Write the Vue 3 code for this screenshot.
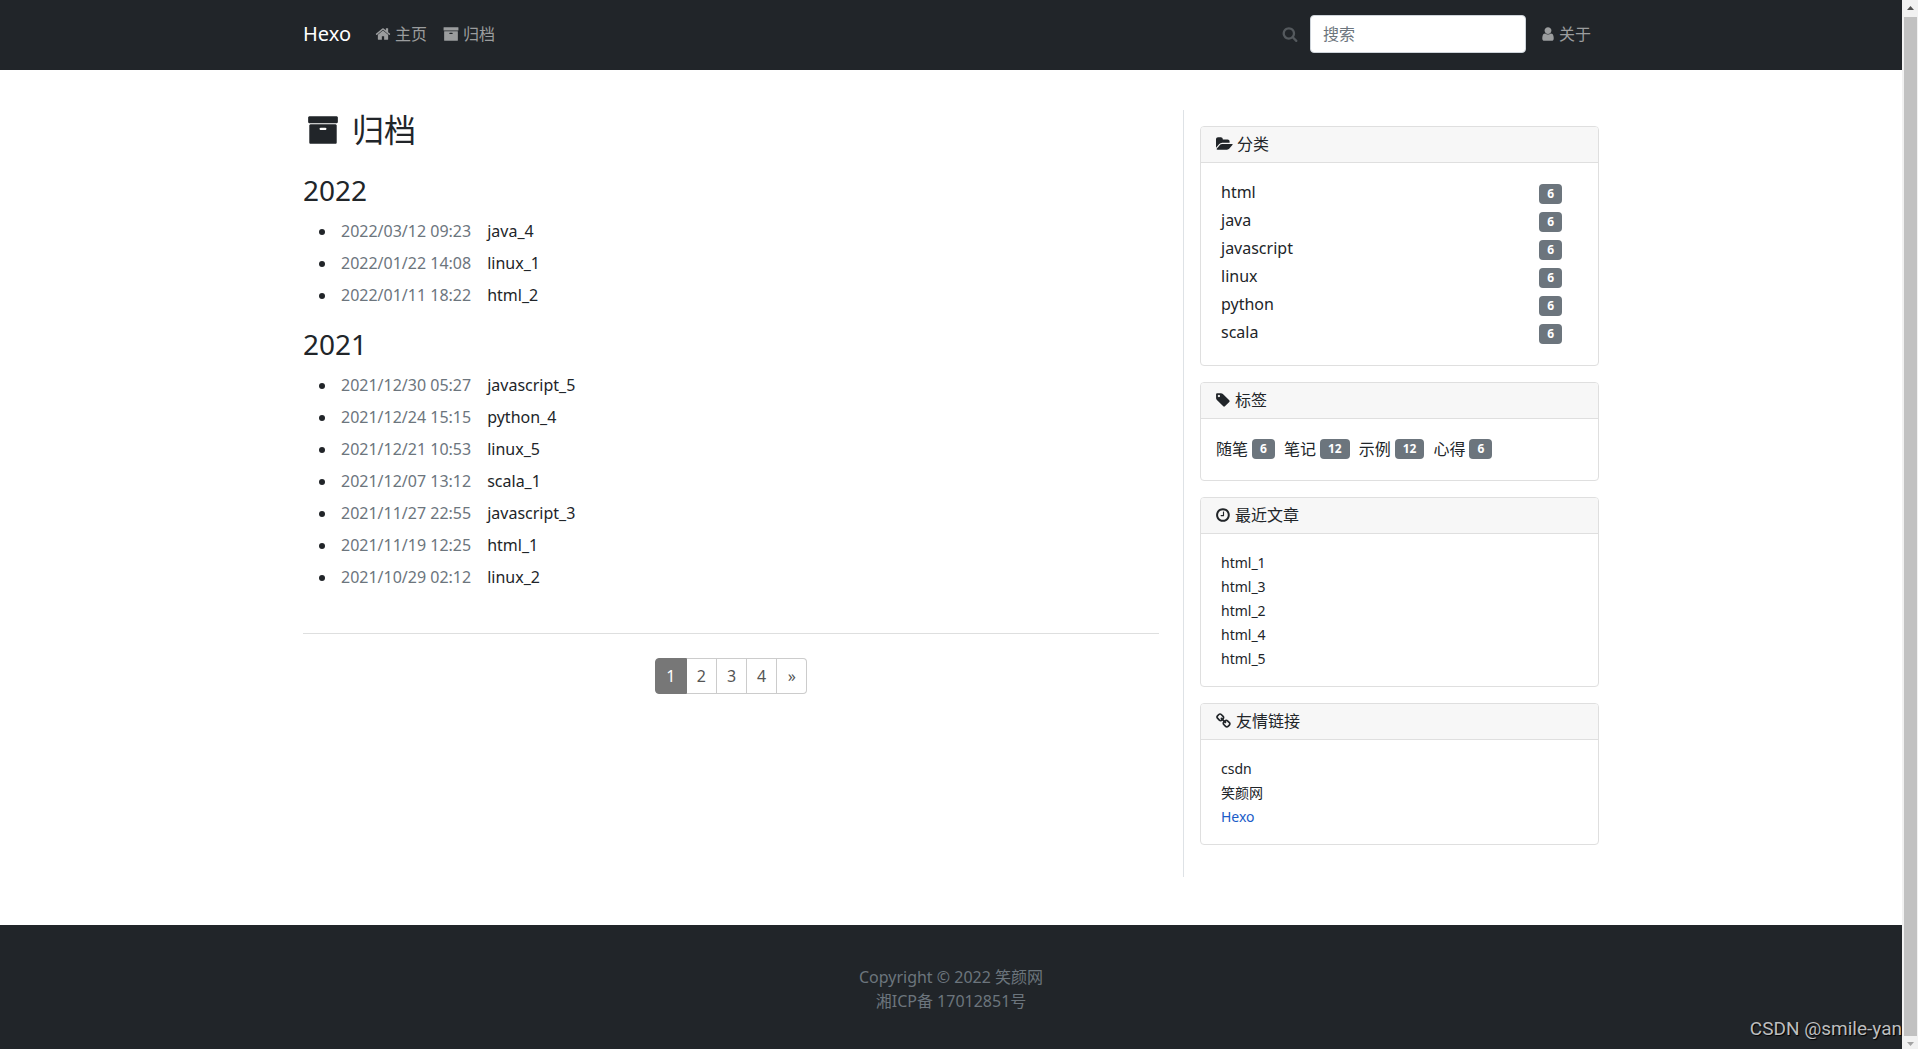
<script setup>
const icons = {
  home: 'M1472 992v480q0 26-19 45t-45 19h-384v-384h-256v384h-384q-26 0-45-19t-19-45v-480q0-1 .5-3t.5-3l575-474 575 474q1 2 1 6zm223-69l-62 74q-8 9-21 11h-3q-13 0-21-7l-692-577-692 577q-12 8-24 7-13-2-21-11l-62-74q-8-10-7-23.5t11-21.5l719-599q32-26 76-26t76 26l244 204v-195q0-14 9-23t23-9h192q14 0 23 9t9 23v408l219 182q10 8 11 21.5t-7 23.5z',
  archive: 'M1088 832q0-26-19-45t-45-19h-256q-26 0-45 19t-19 45 19 45 45 19h256q26 0 45-19t19-45zm576-192v960q0 26-19 45t-45 19h-1408q-26 0-45-19t-19-45v-960q0-26 19-45t45-19h1408q26 0 45 19t19 45zm64-448v256q0 26-19 45t-45 19h-1536q-26 0-45-19t-19-45v-256q0-26 19-45t45-19h1536q26 0 45 19t19 45z',
  search: 'M1216 832q0-185-131.5-316.5t-316.5-131.5-316.5 131.5-131.5 316.5 131.5 316.5 316.5 131.5 316.5-131.5 131.5-316.5zm512 832q0 52-38 90t-90 38q-54 0-90-38l-343-342q-179 124-399 124-143 0-273.5-55.5t-225-150-150-225-55.5-273.5 55.5-273.5 150-225 225-150 273.5-55.5 273.5 55.5 225 150 150 225 55.5 273.5q0 220-124 399l343 343q37 37 37 90z',
  user: 'M1536 1399q0 109-62.5 187t-150.5 78h-854q-88 0-150.5-78t-62.5-187q0-85 8.5-160.5t31.5-152 58.5-131 94-89 134.5-34.5q131 128 313 128t313-128q76 0 134.5 34.5t94 89 58.5 131 31.5 152 8.5 160.5zm-256-887q0 159-112.5 271.5t-271.5 112.5-271.5-112.5-112.5-271.5 112.5-271.5 271.5-112.5 271.5 112.5 112.5 271.5z',
  folder: 'M1879 952q0 31-31 66l-336 396q-43 51-120.5 86.5t-143.5 35.5h-1088q-34 0-60.5-13t-26.5-43q0-31 31-66l336-396q43-51 120.5-86.5t143.5-35.5h1088q34 0 60.5 13t26.5 43zm-343-344v160h-832q-94 0-197 47.5t-164 119.5l-337 396-5 6q0-4-.5-12.5t-.5-12.5v-960q0-92 66-158t158-66h320q92 0 158 66t66 158v32h544q92 0 158 66t66 158z',
  tag: 'M576 448q0-53-37.5-90.5t-90.5-37.5-90.5 37.5-37.5 90.5 37.5 90.5 90.5 37.5 90.5-37.5 37.5-90.5zm1067 576q0 53-37 90l-491 492q-39 37-91 37-53 0-90-37l-715-716q-38-37-64.5-101t-26.5-117v-416q0-52 38-90t90-38h416q53 0 117 26.5t102 64.5l715 714q37 39 37 91z',
  clock: 'M1024 544v448q0 14-9 23t-23 9h-320q-14 0-23-9t-9-23v-64q0-14 9-23t23-9h224v-352q0-14 9-23t23-9h64q14 0 23 9t9 23zm416 352q0-148-73-273t-198-198-273-73-273 73-198 198-73 273 73 273 198 198 273 73 273-73 198-198 73-273zm224 0q0 209-103 385.5t-279.5 279.5-385.5 103-385.5-103-279.5-279.5-103-385.5 103-385.5 279.5-279.5 385.5-103 385.5 103 279.5 279.5 103 385.5z',
  chain: 'M1520 1216q0-40-28-68l-208-208q-28-28-68-28-42 0-72 32 3 3 19 18.5t21.5 21.5 15 19 13 25.5 3.5 27.5q0 40-28 68t-68 28q-15 0-27.5-3.5t-25.5-13-19-15-21.5-21.5-18.5-19q-33 31-33 73 0 40 28 68l206 207q27 27 68 27 40 0 68-26l147-146q28-28 28-67zm-703-705q0-40-28-68l-206-207q-28-28-68-28-39 0-68 27l-147 146q-28 28-28 67 0 40 28 68l208 208q27 27 68 27 42 0 72-31-3-3-19-18.5t-21.5-21.5-15-19-13-25.5-3.5-27.5q0-40 28-68t68-28q15 0 27.5 3.5t25.5 13 19 15 21.5 21.5 18.5 19q33-31 33-73zm895 705q0 120-85 203l-147 146q-83 83-203 83-121 0-204-85l-206-207q-83-83-83-203 0-123 88-209l-88-88q-86 88-208 88-120 0-204-84l-208-208q-84-84-84-204t85-203l147-146q83-83 203-83 121 0 204 85l206 207q83 83 83 203 0 123-88 209l88 88q86-88 208-88 120 0 204 84l208 208q84 84 84 204z',
}

const archive = [
  {
    year: '2022',
    posts: [
      ['2022/03/12 09:23', 'java_4'],
      ['2022/01/22 14:08', 'linux_1'],
      ['2022/01/11 18:22', 'html_2'],
    ],
  },
  {
    year: '2021',
    posts: [
      ['2021/12/30 05:27', 'javascript_5'],
      ['2021/12/24 15:15', 'python_4'],
      ['2021/12/21 10:53', 'linux_5'],
      ['2021/12/07 13:12', 'scala_1'],
      ['2021/11/27 22:55', 'javascript_3'],
      ['2021/11/19 12:25', 'html_1'],
      ['2021/10/29 02:12', 'linux_2'],
    ],
  },
]
const pages = ['1', '2', '3', '4', '»']
const categories = ['html', 'java', 'javascript', 'linux', 'python', 'scala']
const tags = [['随笔', 6], ['笔记', 12], ['示例', 12], ['心得', 6]]
const recent = ['html_1', 'html_3', 'html_2', 'html_4', 'html_5']
const friends = ['csdn', '笑颜网', 'Hexo']
</script>

<template>
  <div class="shell">
    <div class="page">
      <header class="navbar">
        <nav class="container nav">
          <a class="brand" href="#">Hexo</a>
          <a class="nav-link" href="#"><svg class="icon" viewBox="0 0 1792 1792"><path :d="icons.home" /></svg>主页</a>
          <a class="nav-link" href="#"><svg class="icon" viewBox="0 0 1792 1792"><path :d="icons.archive" /></svg>归档</a>
          <form class="search" @submit.prevent>
            <label for="search" aria-label="搜索"><svg class="icon" viewBox="0 0 1792 1792"><path :d="icons.search" /></svg></label>
            <input id="search" type="search" placeholder="搜索">
          </form>
          <a class="nav-link about" href="#"><svg class="icon" viewBox="0 0 1792 1792"><path :d="icons.user" /></svg>关于</a>
        </nav>
      </header>

      <div class="container content">
        <main class="main">
          <h1 class="title"><svg class="title-icon" viewBox="0 0 1792 1792"><path :d="icons.archive" /></svg>归档</h1>
          <section v-for="group in archive" :key="group.year">
            <h2 class="year">{{ group.year }}</h2>
            <ul class="posts">
              <li v-for="[date, name] in group.posts" :key="date">
                <time>{{ date }}</time><a href="#">{{ name }}</a>
              </li>
            </ul>
          </section>
          <hr class="rule">
          <nav class="pagination" aria-label="分页">
            <a v-for="(page, i) in pages" :key="page" href="#" :class="{ active: i === 0 }">{{ page }}</a>
          </nav>
        </main>

        <aside class="sidebar">
          <section class="card">
            <h3><svg class="icon wide" viewBox="0 0 1920 1792"><path :d="icons.folder" /></svg>分类</h3>
            <ul class="categories">
              <li v-for="name in categories" :key="name"><a href="#">{{ name }}</a><span class="badge">6</span></li>
            </ul>
          </section>
          <section class="card">
            <h3><svg class="icon narrow" viewBox="128 0 1664 1792"><path :d="icons.tag" /></svg>标签</h3>
            <div class="tags">
              <a v-for="[name, count] in tags" :key="name" href="#">{{ name }}<span class="badge">{{ count }}</span></a>
            </div>
          </section>
          <section class="card">
            <h3><svg class="icon narrow" viewBox="128 0 1664 1792"><path :d="icons.clock" /></svg>最近文章</h3>
            <ul class="links">
              <li v-for="name in recent" :key="name"><a href="#">{{ name }}</a></li>
            </ul>
          </section>
          <section class="card">
            <h3><svg class="icon" viewBox="64 0 1792 1792"><path :d="icons.chain" /></svg>友情链接</h3>
            <ul class="links">
              <li v-for="name in friends" :key="name"><a href="#" :class="{ blue: name === 'Hexo' }">{{ name }}</a></li>
            </ul>
          </section>
        </aside>
      </div>

      <footer class="footer">
        <p>Copyright © 2022 笑颜网</p>
        <p>湘ICP备 17012851号</p>
      </footer>
      <div class="watermark">CSDN @smile-yan</div>
    </div>

    <div class="scrollbar" aria-hidden="true">
      <svg viewBox="0 0 16 17"><path d="M5 10h7L8.500 6z" fill="#505050" /></svg>
      <div class="thumb"></div>
      <svg viewBox="0 0 16 13"><path d="M5 6h7L8.500 10z" fill="#a3a3a3" /></svg>
    </div>
  </div>
</template>

<style>
body {
  margin: 0;
}
</style>

<style scoped>
.shell {
  display: grid;
  grid-template-columns: 1fr 16px;
  height: 100vh;
  overflow: hidden;
  font: 400 16px/24px "Noto Sans", "Noto Sans CJK SC", sans-serif;
  color: #212529;
  background: #fff;
}
.page {
  position: relative;
  display: flex;
  flex-direction: column;
  overflow: hidden;
}
a {
  color: inherit;
  text-decoration: none;
}
ul,
h1,
h2,
h3,
p {
  margin: 0;
  padding: 0;
  font-weight: 400;
}
.container {
  box-sizing: border-box;
  width: 100%;
  max-width: 1320px;
  margin: 0 auto;
  padding: 0 12px;
}
.icon {
  width: 16px;
  height: 16px;
  flex: none;
  fill: currentColor;
}
.icon.wide {
  width: 17px;
}
.icon.narrow {
  width: 15px;
}

/* top bar */
.navbar {
  background: #212529;
}
.nav {
  display: flex;
  align-items: center;
  height: 70px;
  padding-bottom: 2px;
}
.brand {
  margin-right: 24px;
  font-size: 20px;
  line-height: 30px;
  color: #fff;
}
.nav-link {
  display: flex;
  align-items: center;
  gap: 4px;
  margin-right: 16px;
  color: #9b9d9e;
}
.nav-link.about {
  margin: 0 8px 0 14px;
  gap: 3px;
}
.search {
  display: flex;
  align-items: center;
  gap: 12px;
  margin-left: auto;
  color: #54595d;
}
.search label {
  display: flex;
}
.search input {
  box-sizing: border-box;
  width: 216px;
  height: 38px;
  padding: 6px 12px;
  border: 1px solid #ced4da;
  border-radius: 4px;
  background: #fff;
  font: inherit;
  color: #212529;
}
.search input::placeholder {
  color: #6c757d;
  opacity: 1;
}

/* archive column */
.content {
  display: grid;
  grid-template-columns: minmax(0, 55fr) minmax(0, 26fr);
  margin-top: 40px;
  margin-bottom: 48px;
}
.main {
  padding-right: 24px;
}
.title {
  display: flex;
  align-items: center;
  gap: 13px;
  padding-left: 4px;
  margin-bottom: 24px;
  font-size: 32px;
  line-height: 39px;
}
.title-icon {
  width: 32px;
  height: 32px;
  fill: currentColor;
}
.year {
  margin-bottom: 8px;
  font-size: 28px;
  line-height: 34px;
}
.posts {
  margin-bottom: 16px;
  padding-left: 34px;
  line-height: 32px;
}
.posts time {
  margin: 0 16px 0 4px;
  color: #6c757d;
}
.rule {
  height: 1px;
  margin: 40px 0 24px;
  border: 0;
  background: #dedfdf;
}
.pagination {
  display: flex;
  justify-content: center;
}
.pagination a {
  box-sizing: border-box;
  min-width: 30px;
  padding: 5px 10px;
  border: 1px solid #ccc;
  border-left-width: 0;
  text-align: center;
  color: #555;
}
.pagination a.active {
  min-width: 32px;
  border-color: #777;
  border-left-width: 1px;
  border-radius: 4px 0 0 4px;
  background: #777;
  color: #fff;
}
.pagination a:last-child {
  border-radius: 0 4px 4px 0;
}

/* sidebar */
.sidebar {
  display: flex;
  flex-direction: column;
  gap: 16px;
  padding: 16px 0 32px 16px;
  border-left: 1px solid #dee2e6;
}
.card {
  border: 1px solid #dfdfdf;
  border-radius: 4px;
}
.card h3 {
  display: flex;
  align-items: center;
  gap: 4px;
  padding: 5px 15px 6px;
  border-bottom: 1px solid #dfdfdf;
  border-radius: 3px 3px 0 0;
  background: #f7f7f7;
  font-size: 16px;
  line-height: 24px;
}
.categories,
.links {
  list-style: none;
  padding: 17px 36px 15px 20px;
}
.categories {
  padding-bottom: 17px;
}
.categories li {
  display: flex;
  justify-content: space-between;
  align-items: flex-end;
  padding-bottom: 4px;
}
.links {
  font-size: 14px;
  line-height: 24px;
}
.links .blue {
  color: #1a5cc8;
}
.badge {
  box-sizing: border-box;
  height: 20px;
  padding: 0 8px;
  border-radius: 4px;
  background: #6c757d;
  font-size: 12px;
  font-weight: 700;
  line-height: 20px;
  color: #fff;
}
.tags {
  display: flex;
  flex-wrap: wrap;
  gap: 9px;
  padding: 18px 15px 19px;
}
.tags a {
  display: flex;
  align-items: center;
  gap: 4px;
}

/* footer */
.footer {
  flex: 1;
  padding-top: 40px;
  background: #212529;
  color: #6c757d;
  text-align: center;
}
.watermark {
  position: absolute;
  right: 0;
  bottom: 8px;
  font: 19px/24px Roboto, "Liberation Sans", sans-serif;
  color: #bdbebf;
  text-shadow: 1px 1px 1px #000;
}

/* scrollbar */
.scrollbar {
  display: flex;
  flex-direction: column;
  background: #f1f1f1;
}
.scrollbar svg {
  display: block;
  flex: none;
}
.thumb {
  flex: 1;
  margin: 0 1px 0 2px;
  background: #c1c1c1;
}
</style>
